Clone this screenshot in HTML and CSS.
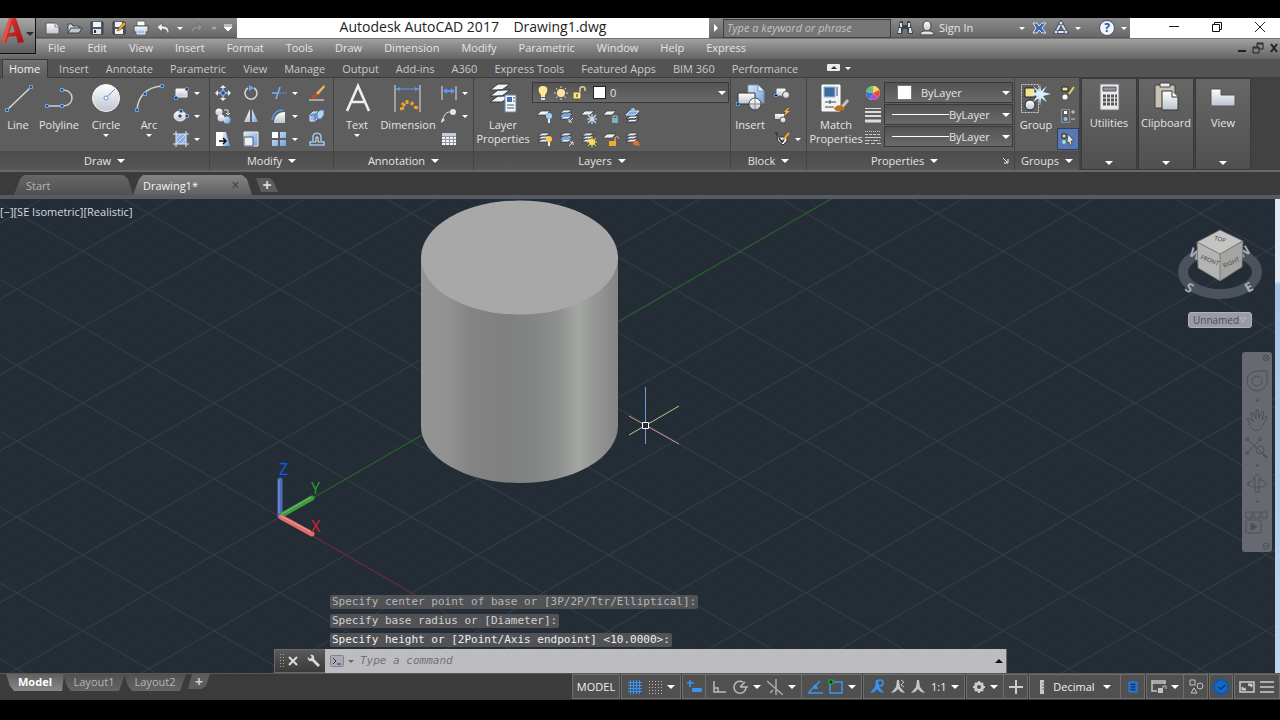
FILE: index.html
```html
<!DOCTYPE html>
<html lang="en">
<head>
    <meta charset="UTF-8">
    <meta name="viewport" content="width=device-width, initial-scale=1.0">
    <title>Autodesk AutoCAD 2017 - Drawing1.dwg</title>
    <link rel="stylesheet" href="styles.css">
</head>
<body>
    <!-- Shared gradients and repeated icon parts -->
    <svg class="defs" width="0" height="0" aria-hidden="true">
        <defs>
            <linearGradient id="silver" x1="0" y1="0" x2="0" y2="1">
                <stop offset="0" stop-color="#fff"/><stop offset="1" stop-color="#bcc3d0"/>
            </linearGradient>
            <linearGradient id="blue" x1="0" y1="0" x2="1" y2="1">
                <stop offset="0" stop-color="#dcebfb"/><stop offset="1" stop-color="#6f9fdc"/>
            </linearGradient>
            <linearGradient id="red" x1="0" y1="0" x2="1" y2="1">
                <stop offset="0" stop-color="#e0403a"/><stop offset="1" stop-color="#a3100f"/>
            </linearGradient>
            <symbol id="sheets" viewBox="0 0 16 16">
                <path d="M1 11l4-3h8l-4 3zM1 8l4-3h8l-4 3zM1 5l4-3h8L9 5z" fill="#e8ecf2" stroke="#30343a" stroke-width=".7"/>
            </symbol>
            <symbol id="sheet" viewBox="0 0 16 16">
                <path d="M0 7l4-4h9l-4 4z" fill="#eef1f5" stroke="#33373d" stroke-width=".7"/>
            </symbol>
            <symbol id="person" viewBox="0 0 16 16">
                <path d="M7 1h2l1 7 5 6-4-1-3-3-3 3-4 1 5-6z"/>
            </symbol>
        </defs>
    </svg>

    <div class="app">
        <header class="top">
            <button class="app-button" aria-label="Application menu">
                <svg width="26" height="27" viewBox="0 0 26 27"><path d="M9 0h7l8 24-6 1-2-7-8 1-2 6-5-1z" fill="url(#red)"/><path d="M12 6l-3 9 6-1z" fill="#8a8a8a"/><path d="M9 0h3L5 25l-4-1z" fill="#ee6a5e" opacity=".6"/></svg>
                <span class="caret dark"></span>
            </button>
            <div class="titlebar">
                <div class="quick">
                    <button aria-label="New"><svg width="16" height="16" viewBox="0 0 16 16"><path d="M1 3h9l4 4v7H1z" fill="url(#silver)" stroke="#555"/><path d="M10 3v4h4" fill="#fff" stroke="#777"/></svg></button>
                    <button aria-label="Open"><svg width="16" height="16" viewBox="0 0 16 16"><path d="M1 13V4h4l1 2h6v2" fill="#cfd6e0" stroke="#3d4550"/><path d="M1 13l3-5h11l-3 5z" fill="#bcc8d6" stroke="#3d4550"/></svg></button>
                    <button aria-label="Save"><svg width="16" height="16" viewBox="0 0 16 16"><path d="M2 2h12v12H2z" fill="#4c5767" stroke="#343c47"/><path d="M4 2h8v5H4z" fill="#eef1f5"/><path d="M4 9h8v5H4z" fill="#dfe4ea"/><path d="M5 10h2v3H5z" fill="#333"/></svg></button>
                    <button aria-label="Save as"><svg width="16" height="16" viewBox="0 0 16 16"><path d="M2 2h12v12H2z" fill="#4c5767" stroke="#343c47"/><path d="M4 2h7v5H4zM4 9h8v5H4z" fill="#eef1f5"/><path d="M7 9l6-7 2 2-6 6-3 1z" fill="#f0a62c" stroke="#7b4a10" stroke-width=".6"/></svg></button>
                    <button aria-label="Plot"><svg width="16" height="16" viewBox="0 0 16 16"><path d="M4 1h8v5H4z" fill="#fff" stroke="#666"/><path d="M1 6h14v6H1z" fill="url(#silver)" stroke="#555"/><path d="M4 10h8v4H4z" fill="#9ec2ee" stroke="#eee"/></svg></button>
                    <button aria-label="Undo"><svg width="16" height="16" viewBox="0 0 16 16"><path d="M2 7l5-4v3c5 0 7 2 7 7h-2c0-3-1-4-5-4v3z" fill="#f1f1f1" stroke="#4a4a4a" stroke-width=".6"/></svg></button>
                    <span class="caret"></span>
                    <button aria-label="Redo"><svg width="16" height="16" viewBox="0 0 16 16"><path d="M14 7L9 3v3c-5 0-7 2-7 7h2c0-3 1-4 5-4v3z" fill="#8f8f8f" stroke="#666" stroke-width=".6"/></svg></button>
                    <span class="caret dim"></span>
                    <button aria-label="Customize"><svg width="10" height="10" viewBox="0 0 10 10"><path d="M1 2h8M1 4h8l-4 4z" stroke="#fff" fill="#fff"/></svg></button>
                </div>
                <h1 class="title">Autodesk AutoCAD 2017 &nbsp;&nbsp; Drawing1.dwg</h1>
                <div class="infocenter">
                    <button class="collapse" aria-label="Collapse"><svg width="6" height="8" viewBox="0 0 6 8"><path d="M1 0l4 4-4 4z" fill="#fff"/></svg></button>
                    <input class="search" type="text" placeholder="Type a keyword or phrase" aria-label="Search help">
                    <button aria-label="Find"><svg width="16" height="16" viewBox="0 0 16 16"><path d="M3 1h3v4h4V1h3l3 13h-5l-1-5H6l-1 5H0z" fill="#3a424e"/><path d="M3 3h2v4H3zM11 3h2v4h-2zM2 8h2v5H1zM12 8h2l1 5h-3z" fill="#dde1e7"/></svg></button>
                    <button class="signin"><svg width="16" height="16" viewBox="0 0 16 16"><ellipse cx="8" cy="6" rx="4" ry="5" fill="url(#silver)" stroke="#444"/><path d="M1 15c0-3 3-4 5-4h4c2 0 5 1 5 4z" fill="url(#silver)" stroke="#444"/></svg>Sign In<span class="caret"></span></button>
                    <button aria-label="Exchange"><svg width="16" height="16" viewBox="0 0 16 16"><path d="M2 3h4l2 3 3-3h4l-4 5 4 5h-4l-3-3-2 3H2l3-5z" fill="#3f67b4" stroke="#dbe3f2"/></svg></button>
                    <button aria-label="Stay connected"><svg width="16" height="16" viewBox="0 0 16 16"><path d="M8 3l5 9H3z" fill="none" stroke="#46536b" stroke-width="4"/><path d="M8 3l5 9H3z" fill="none" stroke="#dde3ee" stroke-width="2"/><circle cx="8" cy="3" r="2" fill="#dde3ee" stroke="#46536b"/><circle cx="3" cy="12" r="2" fill="#dde3ee" stroke="#46536b"/><circle cx="13" cy="12" r="2" fill="#dde3ee" stroke="#46536b"/></svg></button>
                    <span class="caret"></span>
                    <button class="help" aria-label="Help">?</button>
                    <span class="caret"></span>
                </div>
                <div class="window-controls">
                    <button aria-label="Minimize"><svg width="12" height="12" viewBox="0 0 12 12"><path d="M1 5.500h10" stroke="#222"/></svg></button>
                    <button aria-label="Restore"><svg width="12" height="12" viewBox="0 0 12 12"><path d="M1.500 3.500h7v7h-7zM3.500 3.500v-2h7v7h-2" fill="none" stroke="#111"/></svg></button>
                    <button aria-label="Close"><svg width="12" height="12" viewBox="0 0 12 12"><path d="M1 1l10 10M11 1L1 11" stroke="#222"/></svg></button>
                </div>
            </div>
            <nav class="menubar">
                <a href="#">File</a><a href="#">Edit</a><a href="#">View</a><a href="#">Insert</a><a href="#">Format</a><a href="#">Tools</a><a href="#">Draw</a><a href="#">Dimension</a><a href="#">Modify</a><a href="#">Parametric</a><a href="#">Window</a><a href="#">Help</a><a href="#">Express</a>
                <div class="doc-controls">
                    <button aria-label="Minimize drawing"><svg width="12" height="12" viewBox="0 0 12 12"><path d="M2 9h8" stroke="#222" stroke-width="2"/></svg></button>
                    <button aria-label="Restore drawing"><svg width="12" height="12" viewBox="0 0 12 12"><path d="M1 5h6v6H1zM5 5V1h6v6H7M5 2h6M1 6h6" fill="none" stroke="#222"/></svg></button>
                    <button aria-label="Close drawing"><svg width="12" height="12" viewBox="0 0 12 12"><path d="M3 2l6 8M9 2l-6 8" stroke="#222" stroke-width="2"/></svg></button>
                </div>
            </nav>
        </header>

        <nav class="ribbon-tabs">
            <a href="#" class="active">Home</a><a href="#">Insert</a><a href="#">Annotate</a><a href="#">Parametric</a><a href="#">View</a><a href="#">Manage</a><a href="#">Output</a><a href="#">Add-ins</a><a href="#">A360</a><a href="#">Express Tools</a><a href="#">Featured Apps</a><a href="#">BIM 360</a><a href="#">Performance</a>
            <button class="ribbon-toggle" aria-label="Minimize ribbon"><svg width="14" height="8" viewBox="0 0 14 8"><rect width="13" height="7" rx="1" fill="#e9e9e9"/><path d="M4 5l3-3 3 3z" fill="#333"/></svg><span class="caret"></span></button>
        </nav>

        <section class="ribbon">
            <div class="panel draw">
                <div class="panel-body">
                    <button class="big w36"><svg width="32" height="32" viewBox="0 0 32 32"><path d="M5 28L29 5" stroke="#d6d6d6" stroke-width="1.500"/><path d="M3.500 26.500h3v3h-3zM27.500 3.500h3v3h-3z" fill="#3c4a60" stroke="#6ba4f2"/></svg>Line</button>
                    <button class="big w46"><svg width="32" height="32" viewBox="0 0 32 32"><path d="M4 24h16c12 0 12-16 0-16" fill="none" stroke="#cfcfcf" stroke-width="1.500"/><path d="M2.500 22.500h3v3h-3zM17.500 22.500h3v3h-3zM17.500 6.500h3v3h-3z" fill="#3c4a60" stroke="#6ba4f2"/></svg>Polyline</button>
                    <button class="big w48"><svg width="32" height="32" viewBox="0 0 32 32"><circle cx="16" cy="16" r="13.500" fill="url(#silver)" stroke="#f5f5f5"/><path d="M16 16l9-9" stroke="#5d93dd"/><circle cx="16" cy="16" r="2" fill="#fff" stroke="#5d93dd"/></svg>Circle<span class="caret"></span></button>
                    <button class="big w38"><svg width="32" height="32" viewBox="0 0 32 32"><path d="M4 28C5 14 14 5 29 4" fill="none" stroke="#cfcfcf" stroke-width="1.500"/><path d="M2.500 26.500h3v3h-3zM10.500 10.500h3v3h-3zM27.500 2.500h3v3h-3z" fill="#3c4a60" stroke="#6ba4f2"/></svg>Arc<span class="caret"></span></button>
                    <div class="smalls cols-draw">
                        <button aria-label="Rectangle"><svg width="16" height="16" viewBox="0 0 16 16"><path d="M3 4h11v8H3z" fill="url(#silver)" stroke="#eee"/><path d="M1.500 11.500h3v3h-3z" fill="#234" stroke="#5b9bf5"/><path d="M12.500 2.500h3v3h-3z" fill="#445" stroke="#8a7cc8"/></svg><span class="caret"></span></button>
                        <button aria-label="Ellipse"><svg width="16" height="16" viewBox="0 0 16 16"><ellipse cx="7" cy="8" rx="6" ry="5" fill="url(#silver)" stroke="#eee"/><path d="M5 8h4M7 6v4" stroke="#222"/><path d="M12.500 6.500h3v3h-3zM6.500 1.500h3v3h-3z" fill="#345" stroke="#7ca6e4"/></svg><span class="caret"></span></button>
                        <button aria-label="Hatch"><svg width="16" height="16" viewBox="0 0 16 16"><path d="M3 3h10v10H3z" fill="#8bb0e6"/><path d="M3 8l5-5M3 13L13 3M8 13l5-5" stroke="#c4dafa"/><path d="M3 0v16M0 3h16M13 0v16M0 13h16" stroke="#dfe6f0"/></svg><span class="caret"></span></button>
                    </div>
                </div>
                <button class="panel-title">Draw<span class="caret wide"></span></button>
            </div>

            <div class="panel modify">
                <div class="panel-body">
                    <div class="smalls cols-modify">
                        <button aria-label="Move"><svg width="16" height="16" viewBox="0 0 16 16"><path d="M8 0l3 3H5zM8 16l3-3H5zM0 8l3-3v6zM16 8l-3-3v6z" fill="#e8edf5"/><path d="M8 2v12M2 8h12" stroke="#e8edf5"/><path d="M6 6h4v4H6z" fill="#244a84" stroke="#74aaf5"/></svg></button>
                        <button aria-label="Rotate"><svg width="16" height="16" viewBox="0 0 16 16"><path d="M5 3a6 6 0 1 0 6 0" fill="none" stroke="#d8d8d8" stroke-width="1.500"/><path d="M6 0l5 3-5 3z" fill="#6ba4f2"/></svg></button>
                        <button aria-label="Trim"><svg width="16" height="16" viewBox="0 0 16 16"><path d="M1 8h6M9 2L5 14" stroke="#7cb0f5" stroke-width="1.500"/><path d="M8 8h8" stroke="#5b9bf5" stroke-dasharray="2 1"/></svg><span class="caret"></span></button>
                        <button aria-label="Erase"><svg width="16" height="16" viewBox="0 0 16 16"><path d="M15 0L7 8l2 2 7-8z" fill="#f4b55c"/><path d="M7 8l2 2-4 4-3-1z" fill="#d8431c"/><path d="M0 15h15" stroke="#eee"/></svg></button>
                        <button aria-label="Copy"><svg width="16" height="16" viewBox="0 0 16 16"><circle cx="4" cy="4" r="3.500" fill="url(#silver)"/><circle cx="6" cy="10" r="3.500" fill="url(#silver)"/><circle cx="12" cy="12" r="3.500" fill="url(#blue)"/><path d="M9 2h4v4M11 5l2 2 2-2" fill="none" stroke="#ddd"/></svg></button>
                        <button aria-label="Mirror"><svg width="16" height="16" viewBox="0 0 16 16"><path d="M7 1v13H1z" fill="url(#silver)"/><path d="M9 1v13h6z" fill="url(#blue)"/></svg></button>
                        <button aria-label="Fillet"><svg width="16" height="16" viewBox="0 0 16 16"><path d="M3 15C3 8 7 4 14 4v11z" fill="url(#silver)"/><path d="M1 12C2 6 6 2 12 2" fill="none" stroke="#5b9bf5" stroke-width="1.500"/></svg><span class="caret"></span></button>
                        <button aria-label="Explode"><svg width="16" height="16" viewBox="0 0 16 16"><path d="M1 7l3-3h5v6l-3 3H1z" fill="#8cb8ef" stroke="#d9e8fa"/><path d="M1 7h5v6M6 7l3-3" fill="none" stroke="#54709a"/><path d="M8 5l3-3h4v5l-3 4H8z" fill="#b5d2f5" stroke="#54709a"/></svg></button>
                        <button aria-label="Stretch"><svg width="16" height="16" viewBox="0 0 16 16"><path d="M1 1h7v14H1z" fill="#fff"/><path d="M8 1h3l4 14H8z" fill="url(#blue)"/><path d="M4 10h6M8 7l3 3-3 3" fill="none" stroke="#111" stroke-width="1.500"/></svg></button>
                        <button aria-label="Scale"><svg width="16" height="16" viewBox="0 0 16 16"><path d="M1 1h14v14H1z" fill="url(#blue)" stroke="#eee"/><path d="M1 6h9v9H1z" fill="#eceff4" stroke="#556"/></svg></button>
                        <button aria-label="Array"><svg width="16" height="16" viewBox="0 0 16 16"><path d="M1 1h6v6H1z" fill="#fff"/><path d="M9 1h6v6H9zM1 9h6v6H1zM9 9h6v6H9z" fill="url(#blue)"/></svg><span class="caret"></span></button>
                        <button aria-label="Offset"><svg width="16" height="16" viewBox="0 0 16 16"><path d="M1 14h14v-3h-3V6c0-5-8-5-8 0v5H1z" fill="none" stroke="#9dc2f2" stroke-width="1.500"/><path d="M5 11h2V6h2v5h2" fill="none" stroke="#dde8f6"/></svg></button>
                    </div>
                </div>
                <button class="panel-title">Modify<span class="caret wide"></span></button>
            </div>

            <div class="panel annotation">
                <div class="panel-body">
                    <button class="big w46"><svg width="32" height="32" viewBox="0 0 32 32"><path d="M6 29L17 4l11 25M10 20h14" fill="none" stroke="#eee" stroke-width="2.600"/></svg>Text<span class="caret"></span></button>
                    <button class="big w56"><svg width="32" height="32" viewBox="0 0 32 32"><path d="M3 3v27M28 3v27" stroke="#e0e0e0"/><path d="M4 7h23" stroke="#5b9bf5"/><path d="M4 7l4-2v4zM27 7l-4-2v4z" fill="#5b9bf5"/><path d="M8 27l4-1M10 21l3 3M15 18v4M21 20l-2 3M26 26l-4-1" stroke="#f0a22c" stroke-width="3"/></svg>Dimension</button>
                    <div class="smalls cols-draw">
                        <button aria-label="Linear"><svg width="16" height="16" viewBox="0 0 16 16"><path d="M1 1v14M15 1v14" stroke="#e0e0e0"/><path d="M2 6l4-3v2h4V3l4 3-4 3V7H6v2z" fill="#5b9bf5"/></svg><span class="caret"></span></button>
                        <button aria-label="Leader"><svg width="16" height="16" viewBox="0 0 16 16"><path d="M1 14C3 8 4 4 9 4" fill="none" stroke="#ddd"/><path d="M0 15l1-5 3 2z" fill="#ddd"/><circle cx="12" cy="4" r="3" fill="#e6e6e6"/></svg><span class="caret"></span></button>
                        <button aria-label="Table"><svg width="16" height="16" viewBox="0 0 16 16"><path d="M1 2h14v12H1z" fill="#f2f4f8"/><path d="M1 2h14v3H1z" fill="#c8ccd4"/><path d="M1 5.500h14M1 8.500h14M1 11.500h14M4.500 5v9M8.500 5v9M12.500 5v9" stroke="#8d95a3"/></svg></button>
                    </div>
                </div>
                <button class="panel-title">Annotation<span class="caret wide"></span></button>
            </div>

            <div class="panel layers">
                <div class="panel-body">
                    <button class="big w58"><svg width="32" height="32" viewBox="0 0 32 32"><path d="M3 20l8-6h12l-8 6zM3 14l8-6h12l-8 6zM3 8l8-6h12l-8 6z" fill="#f0f2f5" stroke="#33373d"/><path d="M18 13h11v17H18z" fill="#f4f7fb" stroke="#5f83b5"/><path d="M20 15h5v5h-5z" fill="#3f6fb5"/><path d="M26 16h2M26 19h2M20 23h7M20 26h7" stroke="#555"/></svg>Layer<br>Properties</button>
                    <div class="stack">
                        <label class="combo layer-combo">
                            <svg width="16" height="18" viewBox="0 0 16 18"><path d="M8 2c-6 0-5 6-2 9v2h4v-2c3-3 4-9-2-9z" fill="#ffe793"/><path d="M6 14h4v2H6z" fill="#ddd"/></svg>
                            <svg width="16" height="18" viewBox="0 0 16 18"><circle cx="8" cy="9" r="4" fill="#ffe9a0"/><path d="M8 2v14M1 9h14M3 4l10 10M13 4L3 14" stroke="#f1ddb0" stroke-dasharray="2 2"/></svg>
                            <svg width="16" height="18" viewBox="0 0 16 18"><path d="M2 8h8v7H2z" fill="#f5e69a" stroke="#665b20"/><path d="M9 8V5c0-3 5-3 5 0v2" fill="none" stroke="#ddd38c" stroke-width="1.500"/><path d="M6 10v3" stroke="#222"/></svg>
                            <span class="swatch"></span>
                            <select aria-label="Layer"><option>0</option></select><span class="caret wide"></span>
                        </label>
                        <div class="smalls cols-layers">
                            <button aria-label="Off"><svg width="16" height="16" viewBox="0 0 16 16"><use href="#sheet"/><circle cx="12" cy="8" r="3" fill="#9cd0f7"/><path d="M12 11v4" stroke="#e8e8e8" stroke-width="2"/></svg></button>
                            <button aria-label="Isolate"><svg width="16" height="16" viewBox="0 0 16 16"><use href="#sheets"/><path d="M1 9l4-3h8l-4 3z" fill="#6ea5ec"/><path d="M14 10l-4 4m0-3v3h3" fill="none" stroke="#ddd"/></svg></button>
                            <button aria-label="Freeze"><svg width="16" height="16" viewBox="0 0 16 16"><use href="#sheet"/><path d="M11 6v10M6 11h10M7 7l8 8M15 7l-8 8" stroke="#c9e1fa" stroke-width="1.200"/></svg></button>
                            <button aria-label="Lock"><svg width="16" height="16" viewBox="0 0 16 16"><use href="#sheet"/><path d="M9 10h6v5H9z" fill="#7cb3b8"/><path d="M10 10V8h4v2" fill="none" stroke="#9bd0d4"/></svg></button>
                            <button aria-label="Make current"><svg width="16" height="16" viewBox="0 0 16 16"><path d="M1 14l4-3h9l-4 3zM1 11l4-3h9l-4 3z" fill="#eef1f5" stroke="#33373d"/><path d="M1 7l4-4h9l-4 4z" fill="#78aef0" stroke="#dce8f5"/><circle cx="8" cy="2" r="2" fill="#99c6f7"/></svg></button>
                            <button aria-label="All on"><svg width="16" height="16" viewBox="0 0 16 16"><use href="#sheets"/><circle cx="12" cy="8" r="3" fill="#ffc94f"/><path d="M12 11v4" stroke="#eee" stroke-width="2"/></svg></button>
                            <button aria-label="Unisolate"><svg width="16" height="16" viewBox="0 0 16 16"><use href="#sheets"/><path d="M1 9l4-3h8l-4 3z" fill="#6ea5ec"/><path d="M10 15l4-4m-3 0h3v3" fill="none" stroke="#ddd"/></svg></button>
                            <button aria-label="Thaw"><svg width="16" height="16" viewBox="0 0 16 16"><use href="#sheets"/><circle cx="11" cy="11" r="3" fill="#ffe667"/><path d="M11 6v10M6 11h10M7 7l8 8M15 7l-8 8" stroke="#ffd944"/></svg></button>
                            <button aria-label="Unlock"><svg width="16" height="16" viewBox="0 0 16 16"><use href="#sheet"/><path d="M6 10h7v5H6z" fill="#f3aa2c"/><path d="M12 10V8c0-3 4-3 4 0" fill="none" stroke="#f3c36c"/></svg></button>
                            <button aria-label="Match layer"><svg width="16" height="16" viewBox="0 0 16 16"><use href="#sheets"/><path d="M7 10l6 0 2 5-6-1z" fill="#df7429"/></svg></button>
                        </div>
                    </div>
                </div>
                <button class="panel-title">Layers<span class="caret wide"></span></button>
            </div>

            <div class="panel block">
                <div class="panel-body">
                    <button class="big w38"><svg width="32" height="32" viewBox="0 0 32 32"><path d="M14 3h10l6 6v12H14z" fill="url(#blue)" stroke="#7d93ae"/><path d="M24 3v6h6" fill="#eef4fb" stroke="#7d93ae"/><path d="M4 11h17v11H4z" fill="url(#silver)" stroke="#333"/><circle cx="21" cy="22" r="6" fill="url(#silver)" stroke="#444"/><path d="M21 17v10M16 22h10" stroke="#888"/><path d="M2.500 20.500h3v3h-3z" fill="#234" stroke="#5b9bf5"/></svg>Insert</button>
                    <div class="smalls cols-draw">
                        <button aria-label="Create block"><svg width="16" height="16" viewBox="0 0 16 16"><path d="M3 4h8v6H3z" fill="url(#silver)" stroke="#eee"/><circle cx="12" cy="10" r="3.500" fill="url(#silver)" stroke="#555"/><path d="M.5 9.500h3v2h-3z" stroke="#5b9bf5"/></svg></button>
                        <button aria-label="Block editor"><svg width="16" height="16" viewBox="0 0 16 16"><path d="M1 6h9v5H1z" fill="url(#silver)"/><circle cx="9" cy="12" r="3" fill="url(#silver)" stroke="#555"/><path d="M14 0l-4 4h2l-2 4 6-5h-3l2-3z" fill="#ffb932"/></svg></button>
                        <button aria-label="Edit attributes"><svg width="16" height="16" viewBox="0 0 16 16"><path d="M1 2h2v3" fill="none" stroke="#222"/><path d="M3 6h10v4l-4 4-5-4z" fill="#eef0f4" stroke="#333"/><path d="M15 2L9 9" stroke="#f0a22c" stroke-width="2"/><path d="M5 7l3 4 2-2" fill="none" stroke="#222" stroke-width="1.500"/></svg><span class="caret"></span></button>
                    </div>
                </div>
                <button class="panel-title">Block<span class="caret wide"></span></button>
            </div>

            <div class="panel properties">
                <div class="panel-body">
                    <button class="big w58"><svg width="32" height="32" viewBox="0 0 32 32"><path d="M2 3h18v26H2z" fill="#f0f3f7" stroke="#fff"/><path d="M4 5h11v10H4z" fill="#3a6c9e" stroke="#9dbbe0"/><path d="M5 20h11M5 25h9M10 18v4M17 5v9" stroke="#444"/><path d="M28 18l-6 7" stroke="#c9c2b6" stroke-width="3"/><path d="M14 27c3-6 9-4 11 0-4 3-8 3-11 0z" fill="#b8701f"/></svg>Match<br>Properties</button>
                    <div class="prop-rows">
                        <svg width="16" height="16" viewBox="0 0 16 16"><circle cx="8" cy="8" r="7" fill="#eee"/><path d="M8 8V1a7 7 0 0 1 6 4z" fill="#ffd64a"/><path d="M8 8l6-3a7 7 0 0 1-1 8z" fill="#e64b3c"/><path d="M8 8l5 5a7 7 0 0 1-8 1z" fill="#b04ad0"/><path d="M8 8l-3 6a7 7 0 0 1-4-7z" fill="#3b6fd8"/><path d="M8 8L1 7a7 7 0 0 1 7-6z" fill="#63c07a"/></svg>
                        <label class="combo"><span class="swatch big-swatch"></span><select aria-label="Object color"><option>ByLayer</option></select><span class="caret wide"></span></label>
                        <svg width="16" height="16" viewBox="0 0 16 16"><path d="M0 1.500h16" stroke="#ddd"/><path d="M0 5h16" stroke="#ddd" stroke-width="2"/><path d="M0 9h16" stroke="#ddd" stroke-width="2"/><path d="M0 14h16" stroke="#ddd" stroke-width="3"/></svg>
                        <label class="combo"><span class="sample"></span><select aria-label="Lineweight"><option>ByLayer</option></select><span class="caret wide"></span></label>
                        <svg width="16" height="16" viewBox="0 0 16 16"><g stroke="#ccc"><path d="M0 2.500h16" stroke-dasharray="1 1"/><path d="M0 5.500h16" stroke-dasharray="3 1"/><path d="M0 8.500h16"/><path d="M0 11.500h16" stroke-dasharray="5 1 1 1"/><path d="M0 14.500h16" stroke-dasharray="4 2"/></g></svg>
                        <label class="combo"><span class="sample"></span><select aria-label="Linetype"><option>ByLayer</option></select><span class="caret wide"></span></label>
                    </div>
                </div>
                <div class="panel-title has-launcher"><button>Properties<span class="caret wide"></span></button>
                    <button class="launcher" aria-label="Properties palette"><svg width="6" height="6" viewBox="0 0 6 6"><path d="M0 0l5 5M5 1v4H1" fill="none" stroke="#eee"/></svg></button></div>
            </div>

            <div class="panel groups">
                <div class="panel-body">
                    <button class="big w42"><svg width="32" height="32" viewBox="0 0 32 32"><path d="M1.500 2.500h17v28h-17z" fill="none" stroke="#ccc" stroke-dasharray="2 1"/><path d="M5 6h10v9H5z" fill="#f3e48a" stroke="#222"/><circle cx="10" cy="23" r="5" fill="url(#silver)" stroke="#222"/><path d="M20 2l1 7 6-5-4 6 8 2-8 2 4 6-6-4-1 8-1-8-6 4 4-6-8-2 8-2-4-6 6 5z" fill="#d6efff"/></svg>Group</button>
                    <div class="smalls cols-groups">
                        <button aria-label="Ungroup"><svg width="16" height="16" viewBox="0 0 16 16"><path d="M2 2h6v4H2z" fill="#f3e48a" stroke="#222"/><circle cx="5" cy="12" r="2.500" fill="#fff"/><path d="M14 2l-5 7" stroke="#e2cf5c" stroke-width="2"/></svg></button>
                        <button aria-label="Group edit"><svg width="16" height="16" viewBox="0 0 16 16"><path d="M1.500 1.500h8v13h-8z" fill="none" stroke="#bbb" stroke-dasharray="1 1"/><path d="M4 3h3v3H4z" fill="#fff"/><circle cx="5.500" cy="11" r="2" fill="#8dbcf7"/><path d="M11 4h4M13 2v4M11 11h4" stroke="#ccc"/></svg></button>
                        <button class="on" aria-label="Group selection on"><svg width="16" height="16" viewBox="0 0 16 16"><path d="M2 3h4v4H2z" fill="#e8e488" stroke="#223"/><circle cx="4" cy="11" r="2" fill="#a9dbc0"/><path d="M8 3l6 7-3 0 1 4-2 0-1-3-2 1z" fill="#dfe8c6" stroke="#223" stroke-width=".6"/></svg></button>
                    </div>
                </div>
                <button class="panel-title">Groups<span class="caret wide"></span></button>
            </div>

            <button class="slide-panel"><svg width="32" height="32" viewBox="0 0 32 32"><path d="M7 3h19v26H7z" fill="#e9ebee" stroke="#777"/><path d="M10 6h13v4H10z" fill="#8f949c" stroke="#555"/><path d="M10 15h3m1 0h3m1 0h3m1 0h2M10 19h3m1 0h3m1 0h3m1 0h2M10 23h3m1 0h3m1 0h3m1 0h2" stroke="#555" stroke-width="3"/></svg>Utilities<span class="caret wide"></span></button>
            <button class="slide-panel"><svg width="32" height="32" viewBox="0 0 32 32"><path d="M5 4h20v23H5z" fill="#c9c0b4" stroke="#443f38"/><path d="M10 2h10v4H10z" fill="#eee" stroke="#444"/><path d="M12 10h10l6 6v13H12z" fill="url(#silver)" stroke="#333"/><path d="M22 10v6h6" fill="#fff" stroke="#333"/></svg>Clipboard<span class="caret wide"></span></button>
            <button class="slide-panel"><svg width="32" height="32" viewBox="0 0 32 32"><path d="M4 8h10v6h14v11H4z" fill="url(#silver)" stroke="#555"/></svg>View<span class="caret wide"></span></button>
        </section>

        <nav class="file-tabs">
            <a href="#" class="file-tab">Start</a>
            <a href="#" class="file-tab active">Drawing1*<span class="close">✕</span></a>
            <button class="add-tab" aria-label="New drawing">+</button>
        </nav>

        <main class="workspace">
            <div class="viewport">
                <svg class="scene" viewBox="0 0 1275 474" preserveAspectRatio="xMinYMin slice">
                    <defs>
                        <pattern id="minor" x="280" y="318" width="26.300" height="15.180" patternUnits="userSpaceOnUse">
                            <path d="M0 0l26.300 15.180M26.300 0L0 15.180" stroke="#262f39" stroke-width=".7"/>
                        </pattern>
                        <pattern id="major" x="280" y="318" width="131.500" height="75.900" patternUnits="userSpaceOnUse">
                            <path d="M0 0l131.500 75.900M131.500 0L0 75.900" stroke="#38414b" stroke-width=".9"/>
                        </pattern>
                        <linearGradient id="side" x1="0" x2="1" y1="0" y2="0">
                            <stop offset="0" stop-color="#949594"/><stop offset=".14" stop-color="#909190"/><stop offset=".26" stop-color="#828382"/><stop offset=".44" stop-color="#7f807f"/><stop offset=".58" stop-color="#828684"/><stop offset=".7" stop-color="#8f918f"/><stop offset=".8" stop-color="#a4a6a3"/><stop offset=".88" stop-color="#969896"/><stop offset="1" stop-color="#848584"/>
                        </linearGradient>
                    </defs>
                    <rect width="1275" height="474" fill="#242c36"/>
                    <rect width="1275" height="474" fill="url(#minor)"/>
                    <rect width="1275" height="474" fill="url(#major)"/>
                    <path d="M280 318L831 0" stroke="#226a26"/>
                    <path d="M280 318l165 95" stroke="#7a232d"/>
                    <path d="M421 58v169a98.500 57 0 0 0 197 0V58z" fill="url(#side)"/>
                    <ellipse cx="519.500" cy="58.500" rx="98.500" ry="57" fill="#a8a8a8"/>
                    <!-- UCS icon -->
                    <g stroke-linecap="round" stroke-width="5">
                        <path d="M280 281v36" stroke="#4a6cb8"/>
                        <path d="M282 316l30-17" stroke="#3f9a42"/>
                        <path d="M281 318l31 17" stroke="#e06e6e"/>
                    </g>
                    <path d="M279 281v33" stroke="#7f9cdb"/>
                    <path d="M282 315l29-17" stroke="#6cc06c"/>
                    <path d="M281 317l30 16" stroke="#f5a09e"/>
                    <text class="ucs" x="279" y="276" fill="#0f58ff">Z</text>
                    <text class="ucs" x="311" y="295" fill="#1fa32a">Y</text>
                    <text class="ucs" x="311" y="333" fill="#d8242c">X</text>
                    <!-- Crosshair cursor -->
                    <path d="M645.500 188v57" stroke="#6c9ce0"/>
                    <path d="M629 236l50-29" stroke="#b9cb82"/>
                    <path d="M629 217l50 28" stroke="#cf9490"/>
                    <path d="M642.500 223.500h6v6h-6z" fill="#232b35" stroke="#fff"/>
                </svg>

                <div class="view-label"><button>[−]</button><button>[SE Isometric]</button><button>[Realistic]</button></div>

                <div class="viewcube">
                    <svg width="88" height="74" viewBox="0 0 88 74">
                        <ellipse cx="44" cy="45" rx="37" ry="22" fill="none" stroke="#4b525c" stroke-width="10"/>
                        <g class="compass"><text x="12" y="28" transform="rotate(30 12 28)">W</text><text x="66" y="31" transform="rotate(-30 66 31)">N</text><text x="8" y="63" transform="rotate(30 8 63)">S</text><text x="72" y="66" transform="rotate(-30 72 66)">E</text></g>
                        <path d="M44 3l23 11-23 13-23-12z" fill="#c4c4c2"/>
                        <path d="M21 15l23 12v27L22 41z" fill="#b4b5b3"/>
                        <path d="M67 14L44 27v27l22-14z" fill="#a4a5a3"/>
                        <path d="M44 3l23 11-23 13-23-12zM44 27v27M21 15l1 26 22 13 22-14 1-26" fill="none" stroke="#6d6e6e" stroke-width=".8"/>
                        <g class="faces"><text x="38" y="13" transform="rotate(12 38 13)">TOP</text><text x="24" y="32" transform="rotate(20 24 32)">FRONT</text><text x="48" y="41" transform="rotate(-24 48 41)">RIGHT</text></g>
                    </svg>
                    <button class="ucs-name">Unnamed<svg width="8" height="6" viewBox="0 0 8 6"><path d="M1 1h6L4 5z" fill="none" stroke="#b4b5bd"/></svg></button>
                </div>

                <div class="navbar">
                    <svg width="30" height="200" viewBox="0 0 30 200" fill="none" stroke="#4b5056">
                        <circle cx="24" cy="6" r="3"/><path d="M22 4l4 4M26 4l-4 4"/>
                        <path d="M15 19h10v11a10 10 0 1 1-10-11z"/><circle cx="15" cy="29" r="5"/>
                        <path d="M14 48h3l-1.500 2z"/>
                        <path d="M8 72l-3-5 2-1 4 4-2-9 2-1 3 7V58h2l1 8 3-7 2 1-2 8 4-4 1 2-6 10c-2 4-9 4-12-4z"/>
                        <path d="M5 87l15 14M5 101l13-13"/><circle cx="5" cy="87" r="1.500"/><circle cx="5" cy="101" r="1.500"/><circle cx="18" cy="87" r="1.500"/><circle cx="18" cy="98" r="4"/><path d="M21 102l4 4" stroke-width="2"/>
                        <path d="M14 113h3l-1.500 2z"/>
                        <path d="M13 140v-13h-2l4-5 4 5h-2v13zM6 130c-3 6 18 7 18 2 0-3-3-4-7-4M6 130l5-1M6 130l1 4"/>
                        <path d="M14 149h3l-1.500 2z"/>
                        <path d="M4 160h6v6H4zM12 160h6v6h-6zM20 160h5v6h-5zM4 168h15v13H4z"/><path d="M9 171l6 4-6 3z" fill="#4b5056"/>
                        <circle cx="24" cy="194" r="3"/><path d="M22 193l2 2 2-2"/>
                    </svg>
                </div>

                <div class="command">
                    <div class="history">
                        <p class="old">Specify center point of base or [3P/2P/Ttr/Elliptical]:</p>
                        <p class="mid">Specify base radius or [Diameter]:</p>
                        <p>Specify height or [2Point/Axis endpoint] &lt;10.0000&gt;:</p>
                    </div>
                    <div class="command-bar">
                        <span class="grip"></span>
                        <div class="command-buttons">
                            <button aria-label="Close"><svg width="10" height="10" viewBox="0 0 10 10"><path d="M1 1l8 8M9 1L1 9" stroke="#ddd" stroke-width="2"/></svg></button>
                            <button aria-label="Customize"><svg width="14" height="14" viewBox="0 0 14 14"><path d="M1 3l2 2 2-2-2-2c3-1 5 1 4 4l6 6-2 2-6-6C2 8 0 5 1 3z" fill="#d8d8d8"/></svg></button>
                        </div>
                        <div class="entry">
                            <svg width="14" height="12" viewBox="0 0 14 12"><rect x=".5" y=".5" width="13" height="11" rx="1" fill="#a9acb8" stroke="#7e8290"/><path d="M3 3l3 3-3 3M7 9h4" fill="none" stroke="#333"/></svg>
                            <span class="caret grey"></span>
                            <input type="text" placeholder="Type a command" aria-label="Command">
                            <span class="caret-up"></span>
                        </div>
                    </div>
                </div>
            </div>
            <div class="desktop-edge"></div>
        </main>

        <footer class="statusbar">
            <nav class="layout-tabs">
                <a href="#" class="active">Model</a><a href="#">Layout1</a><a href="#">Layout2</a><button aria-label="New layout">+</button>
            </nav>
            <div class="status-tools">
                <div class="cell w48"><button>MODEL</button></div>
                <div class="cell gap w60">
                    <button aria-label="Grid"><svg width="16" height="16" viewBox="0 0 16 16"><path d="M3.500 1v14M6.500 1v14M9.500 1v14M12.500 1v14M1 3.500h14M1 6.500h14M1 9.500h14M1 12.500h14" stroke="#3795f5"/></svg></button>
                    <button aria-label="Snap"><svg width="14" height="14" viewBox="0 0 14 14"><path d="M1 1.500h13M1 4.500h13M1 7.500h13M1 10.500h13M1 13.500h13" stroke="#bbb" stroke-dasharray="1 2"/></svg></button>
                    <span class="caret wide"></span>
                </div>
                <div class="cell gap w24"><button aria-label="Dynamic input"><svg width="16" height="16" viewBox="0 0 16 16"><path d="M4 1v7M1 4h7" stroke="#3795f5" stroke-width="1.500"/><rect x="6" y="9" width="10" height="4" rx="1" fill="#3795f5"/></svg></button></div>
                <div class="cell w96">
                    <button aria-label="Ortho"><svg width="16" height="16" viewBox="0 0 16 16"><path d="M3 2v11h12M3 9h4v4" fill="none" stroke="#bbb" stroke-width="1.500"/></svg></button>
                    <button aria-label="Polar"><svg width="16" height="16" viewBox="0 0 16 16"><path d="M14 8A6 6 0 1 1 11 3M8 8h8M8 8l5-5" fill="none" stroke="#bbb" stroke-width="1.500"/></svg></button>
                    <span class="caret wide"></span>
                    <button aria-label="Isodraft"><svg width="16" height="16" viewBox="0 0 16 16"><path d="M9 0v16M0 2l16 14M6 11l-3 3" fill="none" stroke="#aaa" stroke-width="1.500"/></svg></button>
                    <span class="caret wide"></span>
                </div>
                <div class="cell w60">
                    <button aria-label="Object snap tracking"><svg width="16" height="16" viewBox="0 0 16 16"><path d="M1 14h15M2 13L13 2M8 7l3 3" stroke="#3795f5" stroke-width="1.500"/><circle cx="8" cy="8" r="2" fill="#3795f5"/></svg></button>
                    <button aria-label="Object snap"><svg width="16" height="16" viewBox="0 0 16 16"><path d="M2 3h12v11H2z" fill="none" stroke="#3795f5" stroke-width="1.500"/><path d="M1 1h4v4H1z" fill="#0b3a10" stroke="#18c030"/></svg></button>
                    <span class="caret wide"></span>
                </div>
                <div class="cell gap w102">
                    <button aria-label="Annotation visibility"><svg width="16" height="16" viewBox="0 0 16 16" fill="#3795f5"><use href="#person"/><circle cx="11" cy="4" r="3" fill="none" stroke="#3795f5" stroke-width="1.500"/></svg></button>
                    <button aria-label="Auto scale"><svg width="16" height="16" viewBox="0 0 16 16" fill="#c4c4c4"><use href="#person"/><path d="M11 1l3 2-3 3 3 2" fill="none" stroke="#c4c4c4"/></svg></button>
                    <button aria-label="Annotation scale"><svg width="16" height="16" viewBox="0 0 16 16" fill="#c4c4c4"><use href="#person"/></svg></button>
                    <button>1:1</button><span class="caret wide"></span>
                </div>
                <div class="cell gap w38">
                    <button aria-label="Workspace"><svg width="14" height="14" viewBox="0 0 14 14"><circle cx="7" cy="7" r="3.500" fill="none" stroke="#ccc" stroke-width="3"/><path d="M7 1v2M7 11v2M1 7h2M11 7h2M3 3l1 1M10 10l1 1M11 3l-1 1M4 10l-1 1" stroke="#ccc" stroke-width="2"/></svg></button><span class="caret wide"></span>
                </div>
                <div class="cell w24"><button aria-label="Monitor"><svg width="14" height="14" viewBox="0 0 14 14"><path d="M7 0v14M0 7h14" stroke="#ccc" stroke-width="2"/></svg></button></div>
                <div class="cell gap w92">
                    <svg width="6" height="14" viewBox="0 0 6 14"><path d="M1 0h4v14H1z" fill="#c8c8c8"/><path d="M3 3h3M3 6h3M3 9h3" stroke="#666"/></svg>
                    <button>Decimal</button><span class="caret wide"></span>
                </div>
                <div class="cell w24"><button aria-label="Quick properties"><svg width="12" height="14" viewBox="0 0 12 14"><path d="M2 2h8v10H2z" fill="#1c64bf" stroke="#2c82e6"/><path d="M4 4.500h4M4 7h4M4 9.500h4" stroke="#0d2f5c"/></svg></button></div>
                <div class="cell gap w38">
                    <button aria-label="Lock UI"><svg width="16" height="16" viewBox="0 0 16 16"><path d="M6 12H1V2h13v3M1 4h13" fill="none" stroke="#c4c4c4" stroke-width="1.500"/><path d="M7 9h5v5H7z" fill="#c4c4c4"/><path d="M12 9V7h3v3" fill="none" stroke="#c4c4c4"/></svg></button><span class="caret wide"></span>
                </div>
                <div class="cell w24"><button aria-label="Isolate objects"><svg width="16" height="16" viewBox="0 0 16 16" fill="none" stroke="#c4c4c4"><path d="M2 1h5v5H2zM6 9l3 5H3z"/><circle cx="12" cy="7" r="3"/></svg></button></div>
                <div class="cell gap w24"><button aria-label="Graphics performance"><svg width="18" height="18" viewBox="0 0 18 18"><circle cx="9" cy="9" r="7" fill="#1668c4" stroke="#0b58b5" stroke-width="2"/><path d="M6 9l3 2 4-4" fill="none" stroke="#0c3768" stroke-width="1.500"/></svg></button></div>
                <div class="cell gap grow">
                    <button aria-label="Clean screen"><svg width="16" height="14" viewBox="0 0 16 14"><path d="M1 2h14v10H1z" fill="none" stroke="#ccc" stroke-width="1.500"/><path d="M9 4h4v3zM7 10H3V7zM11 5L9 6M5 9l2-1" fill="#ccc" stroke="#ccc"/></svg></button>
                    <button aria-label="Customization"><svg width="16" height="14" viewBox="0 0 16 14"><path d="M1 2h14M1 7h14M1 12h14" stroke="#ccc" stroke-width="1.500"/></svg></button>
                </div>
            </div>
        </footer>
    </div>
</body>
</html>
```
FILE: styles.css
```css
* {
    box-sizing: border-box;
}

body {
    margin: 0;
    background-color: #000;
    color: #e4e4e4;
    font-family: "Open Sans", "Noto Sans", sans-serif;
    font-size: 11px;
    line-height: 14px;
}

button, input, select {
    font: inherit;
    color: inherit;
    background: none;
    border: none;
    margin: 0;
    padding: 0;
}

a {
    color: inherit;
    text-decoration: none;
}

svg {
    display: block;
    flex: none;
}

.defs {
    position: absolute;
}

.app {
    display: flex;
    flex-direction: column;
    min-height: 100vh;
    padding: 18px 0 20px;
    overflow: hidden;
}

/* Small drop-down triangles */
.caret {
    flex: none;
    width: 0;
    border: solid transparent;
    border-width: 3px 3px 0;
    border-top-color: #fff;
}

.caret.wide {
    border-width: 4px 4px 0;
    border-top-color: #fff;
}

.caret.dark {
    border-width: 4px 4px 0;
    border-top-color: #2c2c34;
}

.caret.dim {
    border-top-color: #aaa;
}

.caret.grey {
    border-top-color: #666;
}

/* Title bar and menu bar */
.top {
    display: grid;
    grid-template-columns: 36px 1fr;
    grid-template-rows: 20px 21px;
    background: linear-gradient(#8b8b8b, #686868 19px, #444 20px, #a0a0a0 21px, #646464);
}

.app-button {
    grid-row: 1 / 3;
    display: flex;
    align-items: flex-start;
    height: 36px;
    border: 1px solid #111;
    border-width: 0 1px 1px 0;
    background: linear-gradient(#a8a8a8, #5c5c5c);
}

.app-button .caret {
    margin-top: 14px;
}

.titlebar {
    display: flex;
    align-items: stretch;
    min-width: 0;
}

.quick {
    display: flex;
    align-items: center;
    gap: 6px;
    width: 201px;
    padding-left: 9px;
}

.title {
    flex: 1;
    margin: 0;
    background-color: #fff;
    color: #222;
    font-size: 14px;
    font-weight: 400;
    line-height: 18px;
    text-align: center;
    white-space: pre;
}

.infocenter {
    display: flex;
    align-items: center;
    width: 421px;
    gap: 6px;
}

.collapse {
    display: flex;
    justify-content: center;
    width: 14px;
    margin-right: -6px;
}

.search {
    flex: none;
    width: 168px;
    height: 19px;
    padding: 0 3px 2px;
    background: #757575;
    border: 1px solid #3f3f3f;
    font-style: italic;
}

.search::placeholder {
    color: #c2c2c2;
    opacity: 1;
}

.signin {
    display: flex;
    align-items: center;
    gap: 4px;
    width: 106px;
}

.signin .caret {
    margin-left: auto;
}

.help {
    width: 16px;
    height: 16px;
    margin-left: 12px;
    border: 1px solid #44506a;
    border-radius: 50%;
    background: #f1f4fa;
    color: #2556a8;
    font-weight: 700;
    font-size: 12px;
}

.window-controls {
    display: flex;
    align-items: center;
    gap: 31px;
    width: 150px;
    padding: 0 0 3px 38px;
    background: #fff;
}

.menubar {
    display: flex;
    align-items: center;
    gap: 22px;
    padding: 0 0 2px 12px;
    white-space: nowrap;
}

.doc-controls {
    display: flex;
    gap: 4px;
    margin-left: auto;
}

/* Ribbon */
.ribbon-tabs {
    display: flex;
    height: 19px;
    padding-left: 2px;
    background: #535353;
    border-bottom: 1px solid #3c3c3c;
    color: #c9c9c9;
    white-space: nowrap;
}

.ribbon-tabs a {
    padding: 3px 9px 0 8px;
}

.ribbon-tabs .active {
    border: 1px solid #3a3a3a;
    border-bottom: none;
    padding: 2px 7px 0 6px;
    margin-right: 3px;
    height: 19px;
    background: linear-gradient(#727272, #5d5d5d);
    color: #f2f2f2;
}

.ribbon-toggle {
    display: flex;
    align-items: center;
    gap: 4px;
    margin-left: 20px;
}

.ribbon {
    display: flex;
    height: 94px;
    background: #424242;
    border-bottom: 2px solid #686868;
}

.panel {
    display: flex;
    flex-direction: column;
    flex: none;
    border-right: 1px solid #444;
    background: #5e5e5e;
}

.draw { width: 210px; }
.modify { width: 124px; }
.annotation { width: 140px; }
.layers { width: 257px; }
.block { width: 76px; }
.properties { width: 208px; }
.groups { width: 65px; }

.panel-body {
    display: flex;
    flex: 1;
    padding-top: 4px;
}

.panel-title {
    position: relative;
    display: flex;
    align-items: center;
    justify-content: center;
    height: 19px;
    background: linear-gradient(#4c4c4c, #575757);
}

.panel-title .caret {
    margin-left: 6px;
}

.panel-title button {
    display: flex;
    align-items: center;
}

.has-launcher {
    padding-right: 12px;
}

.panel-title .launcher {
    position: absolute;
    right: 5px;
}

.big {
    display: flex;
    flex-direction: column;
    align-items: center;
    flex: none;
    white-space: nowrap;
}

.big svg {
    margin-bottom: 4px;
}

.big .caret {
    margin-top: 2px;
}

.smalls {
    display: grid;
    grid-auto-rows: 22px;
    row-gap: 1px;
    align-content: start;
}

.smalls button {
    display: flex;
    align-items: center;
    gap: 5px;
    padding-left: 5px;
}

.cols-draw { grid-template-columns: 36px; }
.cols-modify { grid-template-columns: 28px 28px 38px 28px; }
.cols-layers { grid-template-columns: repeat(5, 22px); }
.cols-groups { grid-template-columns: 22px; }

.cols-groups button {
    padding-left: 3px;
}

.cols-groups .on {
    background: #5779b3;
    border: 1px solid #2f3f5c;
    padding-left: 2px;
}

.combo {
    display: flex;
    align-items: center;
    height: 21px;
    padding-right: 2px;
    border: 1px solid #3a3a3a;
    background: linear-gradient(#535353, #696969);
}

.combo select {
    flex: 1;
    min-width: 0;
    appearance: none;
}

.layer-combo {
    width: 197px;
    gap: 2px;
    padding-left: 2px;
    margin-bottom: 2px;
}

.swatch {
    width: 13px;
    height: 13px;
    margin: 0 2px 0 4px;
    border: 1px solid #222;
    background: #fff;
}

.big-swatch {
    width: 15px;
    height: 15px;
    margin: 0 9px 0 12px;
    border-color: #777;
}

.sample {
    width: 57px;
    height: 1px;
    margin-left: 7px;
    background: #fff;
}

.prop-rows {
    display: grid;
    grid-template-columns: 16px 129px;
    grid-auto-rows: 21px;
    gap: 1px 3px;
    align-content: start;
    align-items: center;
}

.slide-panel {
    display: flex;
    flex-direction: column;
    align-items: center;
    width: 56px;
    height: 92px;
    margin-left: 1px;
    padding: 2px 0 4px;
    background: linear-gradient(#676767, #505050);
    border: 1px solid #3a3a3a;
    white-space: nowrap;
}

.slide-panel svg {
    margin-bottom: 3px;
}

.slide-panel .caret {
    margin-top: auto;
}

/* Drawing tabs */
.file-tabs {
    display: flex;
    align-items: flex-end;
    height: 27px;
    padding-left: 14px;
    border-bottom: 4px solid #555b64;
    background: #3b3b3b;
}

.file-tab {
    display: flex;
    justify-content: space-between;
    width: 119px;
    height: 20px;
    padding: 4px 12px 0;
    background: linear-gradient(#666, #505050);
    color: #b5b5b5;
    clip-path: polygon(0 100%, 6px 4px, 10px 0, 109px 0, 114px 4px, 100% 100%);
}

.file-tab.active {
    background: linear-gradient(#858585, #606060);
    padding-left: 10px;
    color: #f4f4f4;
}

.close {
    color: #444;
    font-family: "DejaVu Sans", sans-serif;
}

.add-tab {
    width: 22px;
    height: 14px;
    margin: 0 0 3px 4px;
    background: #5c5c5c;
    color: #ddd;
    font-size: 16px;
    font-weight: 700;
    line-height: 14px;
    clip-path: polygon(0 0, 14px 0, 18px 4px, 100% 100%, 5px 100%);
}

/* Drawing area */
.workspace {
    display: flex;
    flex: 1;
}

.viewport {
    position: relative;
    flex: 1;
    min-height: 474px;
    background: #232b35;
    overflow: hidden;
}

.desktop-edge {
    width: 5px;
    background: linear-gradient(#dfe9f6 82px, #a9c5e8 86px, #bdd6f2);
}

.scene {
    position: absolute;
    width: 100%;
    height: 100%;
}

.ucs {
    font-size: 16px;
}

.view-label {
    position: absolute;
    top: 6px;
    left: 0;
    color: #d8dbe0;
}

.viewcube {
    position: absolute;
    top: 28px;
    right: 11px;
    display: flex;
    flex-direction: column;
    align-items: center;
}

.compass {
    fill: #aab0b6;
    font-size: 13px;
    font-weight: 700;
}

.faces {
    fill: #3c3d3d;
    font-size: 6px;
}

.ucs-name {
    display: flex;
    align-items: center;
    justify-content: space-between;
    width: 64px;
    height: 16px;
    margin-top: 11px;
    padding: 0 4px;
    border: 1px solid #b0b1bc;
    border-radius: 3px;
    background: #9a9ba6;
    color: #4a4b55;
    font-size: 10px;
}

.navbar {
    position: absolute;
    top: 153px;
    right: 3px;
    border-radius: 3px;
    background: #666a70;
}

.command {
    position: absolute;
    bottom: 0;
    left: 274px;
    width: 733px;
    font-family: "DejaVu Sans Mono", monospace;
}

.history {
    display: flex;
    flex-direction: column;
    align-items: flex-start;
    gap: 5px;
    padding-left: 56px;
    margin-bottom: 2px;
}

.history p {
    margin: 0;
    padding: 0 2px;
    border-radius: 2px;
    background: #505255;
    color: #f0f0f0;
}

.history .old { color: #b4b6b8; }
.history .mid { color: #d2d3d4; }

.command-bar {
    display: flex;
    align-items: center;
    gap: 4px;
    height: 24px;
    padding-left: 4px;
    background: linear-gradient(#5a5a5a, #3a3a3a);
    border: 1px solid #6a6a6a;
}

.grip {
    width: 5px;
    height: 16px;
    background: radial-gradient(circle, #aaa 1px, transparent 1px) 0 0 / 3px 3px;
}

.command-buttons {
    display: flex;
    align-items: center;
    gap: 9px;
}

.entry {
    display: flex;
    align-items: center;
    flex: 1;
    height: 24px;
    gap: 4px;
    padding: 0 3px 0 5px;
    background: #bdbdc1;
}

.entry input {
    flex: 1;
    padding-left: 2px;
    color: #333;
    font-style: italic;
}

.entry input::placeholder {
    color: #717176;
    opacity: 1;
}

.caret-up {
    border: solid transparent;
    border-width: 0 4px 4px;
    border-bottom-color: #111;
}

/* Layout tabs and status bar */
.statusbar {
    display: flex;
    justify-content: space-between;
    height: 27px;
    background: #3b3b3b;
    border-top: 1px solid #585858;
}

.layout-tabs {
    display: flex;
    padding-left: 6px;
    color: #b5b5b5;
}

.layout-tabs a {
    width: 62px;
    height: 17px;
    padding-top: 1px;
    margin-right: -1px;
    text-align: center;
    background: linear-gradient(#505050, #666);
    clip-path: polygon(0 0, 100% 0, 56px 100%, 8px 100%, 4px 12px);
}

.layout-tabs .active {
    width: 58px;
    background: linear-gradient(#606060, #888);
    color: #fff;
    font-weight: 700;
}

.layout-tabs button {
    width: 22px;
    height: 15px;
    margin-left: 3px;
    background: #5c5c5c;
    color: #ccc;
    font-size: 14px;
    font-weight: 700;
    line-height: 14px;
    clip-path: polygon(4px 0, 100% 0, 18px 12px, 14px 100%, 0 100%);
}

.status-tools {
    display: flex;
    width: 708px;
    height: 26px;
    padding-bottom: 1px;
    color: #f0f0f0;
}

.cell {
    display: flex;
    align-items: center;
    justify-content: space-evenly;
    flex: none;
    border: 1px solid #6e6e6e;
    border-left: none;
    background: #505050;
}

.cell:first-child {
    border-left: 1px solid #6e6e6e;
}

.cell.gap {
    border-left: 1px solid #6e6e6e;
    margin-left: 1px;
}

.w24 { width: 24px; }
.w36 { width: 36px; }
.w38 { width: 38px; }
.w42 { width: 42px; }
.w46 { width: 46px; }
.w48 { width: 48px; }
.w56 { width: 56px; }
.w58 { width: 58px; }
.w60 { width: 60px; }
.w92 { width: 92px; }
.w96 { width: 96px; }
.w102 { width: 102px; }

.cell.grow {
    flex: 1;
}
```
